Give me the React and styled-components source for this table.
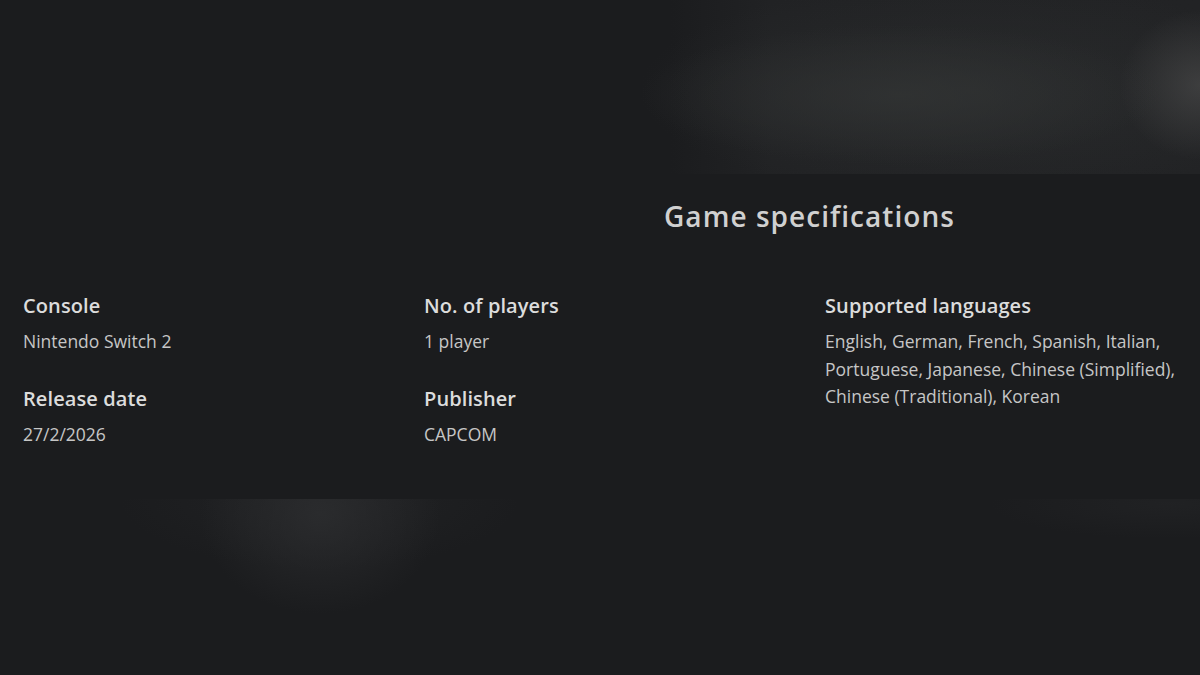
import React from "react";
import styled, { createGlobalStyle } from "styled-components";

const Global = createGlobalStyle`
  html, body { margin: 0; padding: 0; background: #1b1c1e; }
  body { font-family: "Open Sans", "Noto Sans", sans-serif; -webkit-font-smoothing: antialiased; }
`;

const Page = styled.div`
  width: 1200px;
  height: 675px;
  overflow: hidden;
  display: flex;
  flex-direction: column;
  background: #1b1c1e;
`;

const Hero = styled.div`
  height: 174px;
  flex: none;
  background:
    radial-gradient(ellipse 80px 75px at 1200px 85px, rgba(78, 78, 78, 0.6), rgba(78, 78, 78, 0) 100%),
    radial-gradient(ellipse 260px 70px at 900px 95px, rgba(50, 52, 52, 0.75), rgba(50, 52, 52, 0) 100%),
    radial-gradient(ellipse 330px 110px at 970px 90px, rgba(42, 44, 45, 0.9), rgba(42, 44, 45, 0) 100%),
    linear-gradient(90deg, #1b1c1e 0px, #1b1c1e 670px, #212224 770px, #222325 100%);
`;

const Specs = styled.section`
  padding: 23px 23px 51px;
  display: flex;
  flex-direction: column;
`;

const Heading = styled.h2`
  margin: 0 0 57px 419px;
  text-align: center;
  font-size: 28px;
  line-height: 38px;
  font-weight: 600;
  color: #d0d0d0;
  letter-spacing: 1.05px;
`;

const Grid = styled.div`
  display: grid;
  grid-template-columns: 401px 401px 1fr;
`;

const Column = styled.div`
  display: flex;
  flex-direction: column;
  gap: 29px;
`;

const Item = styled.div`
  display: flex;
  flex-direction: column;
  gap: 8px;
`;

const Label = styled.div`
  font-size: 20px;
  line-height: 28px;
  font-weight: 600;
  color: #dcdcdc;
  letter-spacing: 0.1px;
`;

const Value = styled.div`
  font-size: 17.5px;
  line-height: 27.5px;
  font-weight: 400;
  color: #c6c6c6;
`;

const Footer = styled.div`
  flex: 1;
  background:
    radial-gradient(ellipse 120px 100px at 320px 15px, rgba(44, 45, 47, 0.85), rgba(44, 45, 47, 0) 100%),
    radial-gradient(ellipse 200px 70px at 320px 0px, rgba(34, 35, 37, 0.9), rgba(34, 35, 37, 0) 100%),
    radial-gradient(ellipse 180px 35px at 1170px 5px, rgba(34, 35, 37, 0.8), rgba(34, 35, 37, 0) 100%),
    #1b1c1e;
`;

const columns = [
  [
    { label: "Console", value: "Nintendo Switch 2" },
    { label: "Release date", value: "27/2/2026" },
  ],
  [
    { label: "No. of players", value: "1 player" },
    { label: "Publisher", value: "CAPCOM" },
  ],
  [
    {
      label: "Supported languages",
      value:
        "English, German, French, Spanish, Italian, Portuguese, Japanese, Chinese (Simplified), Chinese (Traditional), Korean",
    },
  ],
];

export default function App() {
  return (
    <Page>
      <Global />
      <Hero />
      <Specs>
        <Heading>Game specifications</Heading>
        <Grid>
          {columns.map((col, i) => (
            <Column key={i}>
              {col.map((it) => (
                <Item key={it.label}>
                  <Label>{it.label}</Label>
                  <Value>{it.value}</Value>
                </Item>
              ))}
            </Column>
          ))}
        </Grid>
      </Specs>
      <Footer />
    </Page>
  );
}
